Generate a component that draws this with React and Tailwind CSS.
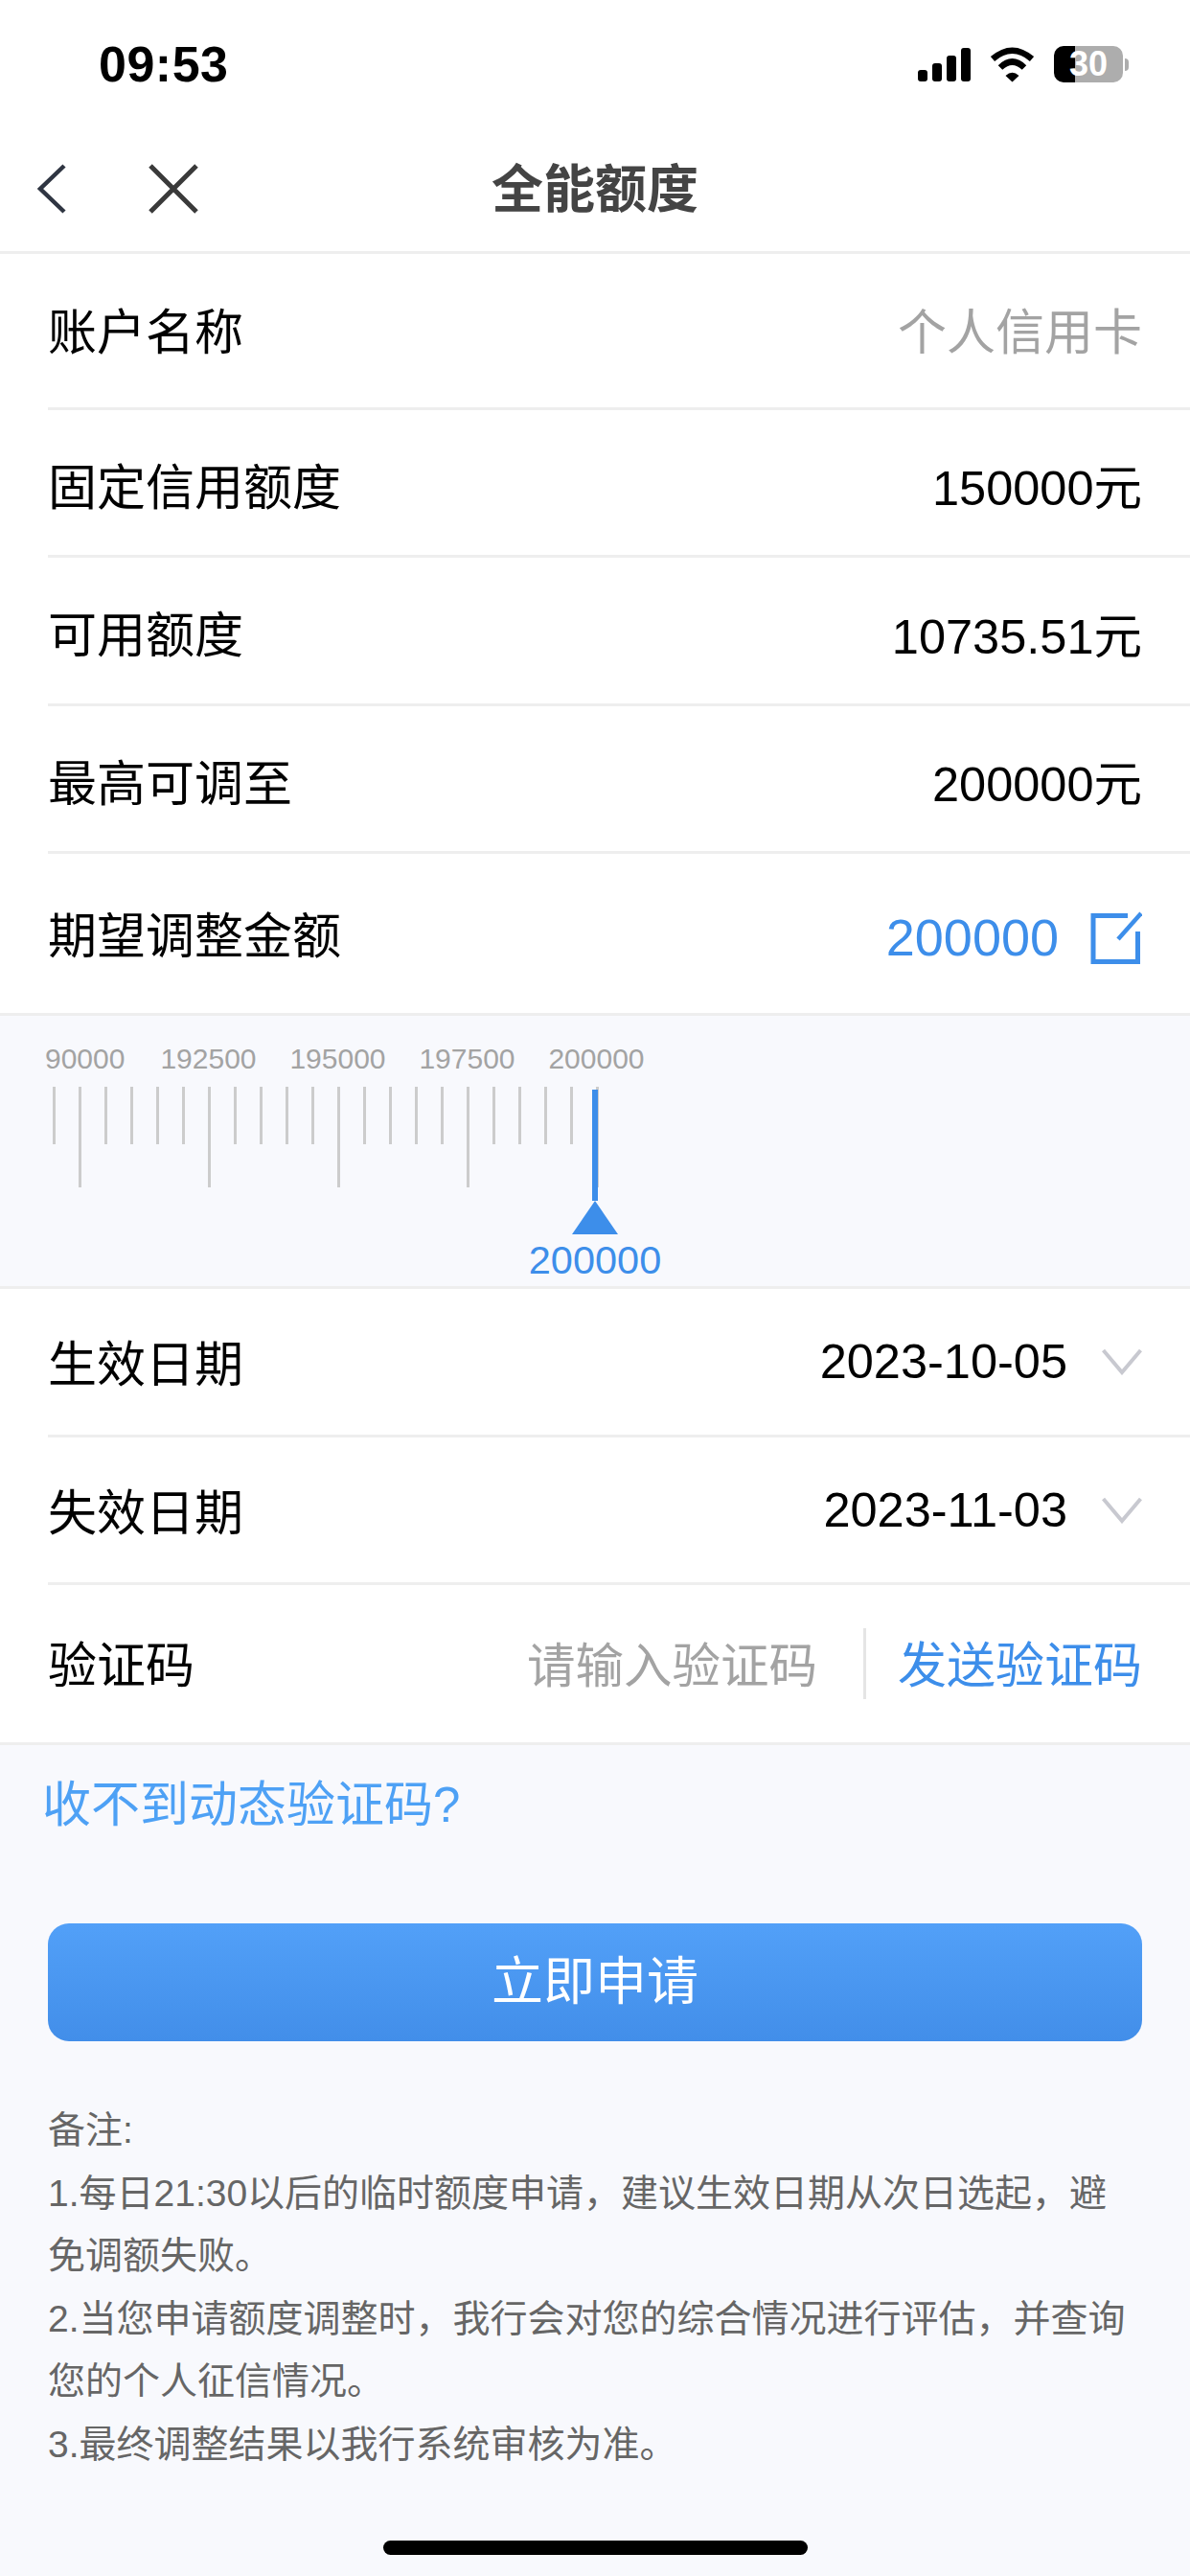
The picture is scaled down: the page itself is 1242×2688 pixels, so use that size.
import React from 'react';

const ticks = Array.from({ length: 22 }, (_, i) => i);

function SignalBars() {
    return (
        <div className="flex items-end gap-[5px] h-[35px]">
            <div className="w-[10px] h-[12px] rounded-[3px] bg-black" />
            <div className="w-[10px] h-[19px] rounded-[3px] bg-black" />
            <div className="w-[10px] h-[27px] rounded-[3px] bg-black" />
            <div className="w-[10px] h-[35px] rounded-[3px] bg-black" />
        </div>
    );
}

function WifiIcon() {
    return (
        <svg width="47" height="37" viewBox="0 0 47 37" fill="none">
            <path d="M3 12.5Q23.5 -5 44 12.5" stroke="#000" strokeWidth="6.5" />
            <path d="M11 21.5Q23.5 9.5 36 21.5" stroke="#000" strokeWidth="6.5" />
            <path d="M16.5 30Q23.5 23.5 30.5 30L23.5 36.5Z" fill="#000" />
        </svg>
    );
}

function Battery() {
    return (
        <div className="flex items-center">
            <div className="relative flex w-[72px] h-[38px]">
                <div className="w-[22px] h-full rounded-l-[10px] bg-black" />
                <div className="flex-1 h-full rounded-r-[10px] bg-[#adadad]" />
                <span className="absolute inset-0 flex items-center justify-center text-[36px] font-bold text-white leading-none">30</span>
            </div>
            <div className="w-[4px] h-[13px] ml-[2px] rounded-r-[4px] bg-[#adadad]" />
        </div>
    );
}

function Chevron() {
    return (
        <svg width="42" height="28" viewBox="0 0 42 28" fill="none">
            <path d="M1.500 2L21 25L40.500 2" stroke="#c8c9d0" strokeWidth="4" />
        </svg>
    );
}

function EditIcon() {
    return (
        <svg width="56" height="56" viewBox="0 0 56 56" fill="none">
            <path d="M41 4.500H5V52.500H51.500V21" stroke="#3d8eea" strokeWidth="5" />
            <path d="M31 29L55 2" stroke="#3d8eea" strokeWidth="4.500" />
        </svg>
    );
}

function Row({ label, height, labelClass = '', children }) {
    return (
        <div className={`ml-[50px] pr-[50px] flex items-center justify-between border-b-[3px] border-[#eeeeee] ${height}`}>
            <span className={`text-[51px] text-black ${labelClass}`}>{label}</span>
            {children}
        </div>
    );
}

function Ruler() {
    return (
        <div className="relative h-[285px] border-b-[3px] border-[#eeeeee] bg-[#f8f9fd] overflow-hidden">
            <div className="flex pt-[27px] pl-[47px] text-[30px] leading-[36px] text-[#a3a3a3]">
                <div className="w-[103px] pr-[20px] text-right">90000</div>
                <div className="w-[135px] text-center">192500</div>
                <div className="w-[135px] text-center">195000</div>
                <div className="w-[135px] text-center">197500</div>
                <div className="w-[135px] text-center">200000</div>
            </div>
            <div className="flex mt-[11px] pl-[55px]">
                {ticks.map((i) => (
                    <div key={i} className="w-[27px]">
                        <div className={`w-[3px] bg-[#cccccc] ${i % 5 === 1 ? 'h-[105px]' : 'h-[60px]'}`} />
                    </div>
                ))}
            </div>
            {/* указатель поверх шкалы */}
            <div className="absolute left-[521px] top-[77px] w-[200px] flex flex-col items-center">
                <div className="w-[6px] h-[116px] bg-[#3d8eea]" />
                <div className="w-0 h-0 border-x-[24px] border-x-transparent border-b-[35px] border-b-[#3d8eea]" />
                <div className="mt-[3px] text-[41.500px] leading-[48px] text-[#3d8eea]">200000</div>
            </div>
        </div>
    );
}

export default function App() {
    return (
        <div className="w-[1242px] h-[2688px] overflow-hidden bg-[#f8f9fd] font-['Liberation_Sans','Noto_Sans_CJK_SC',sans-serif]">
            <div className="bg-white">
                {/* статус-бар */}
                <div className="h-[120px] pt-[38px] pl-[103px] pr-[64px] flex items-start justify-between">
                    <span className="text-[52px] leading-[58px] font-bold text-black tracking-[0.5px]">09:53</span>
                    <div className="flex items-center gap-[20px] pt-[10px]">
                        <SignalBars />
                        <WifiIcon />
                        <Battery />
                    </div>
                </div>

                {/* навигация */}
                <div className="relative h-[145px] pt-[14px] border-b-[3px] border-[#eeeeee] flex items-center justify-center">
                    <div className="absolute left-[38px] top-[51px] flex items-center gap-[84px]">
                        <svg width="32" height="52" viewBox="0 0 32 52" fill="none">
                            <path d="M29 2L4 26L29 50" stroke="#2f3542" strokeWidth="4.500" />
                        </svg>
                        <svg width="54" height="52" viewBox="0 0 54 52" fill="none">
                            <path d="M3 2L51 50M51 2L3 50" stroke="#3a3a3a" strokeWidth="5" />
                        </svg>
                    </div>
                    <span className="text-[54px] font-bold text-[#444444]">全能额度</span>
                </div>

                <Row label="账户名称" height="h-[163px] pt-[6px]">
                    <span className="text-[51px] text-[#a3a3a3]">个人信用卡</span>
                </Row>
                <Row label="固定信用额度" height="h-[154px] pt-[13px]">
                    <span className="text-[50.500px] text-black">150000元</span>
                </Row>
                <Row label="可用额度" height="h-[155px] pt-[13px]">
                    <span className="text-[50.500px] text-black">10735.51元</span>
                </Row>
                <Row label="最高可调至" height="h-[154px] pt-[13px]">
                    <span className="text-[50.500px] text-black">200000元</span>
                </Row>
                <div className="pl-[50px] pr-[50px] h-[169px] pt-[9px] flex items-center justify-between border-b-[3px] border-[#eeeeee]">
                    <span className="text-[51px] text-black">期望调整金额</span>
                    <div className="flex items-center gap-[31px]">
                        <span className="text-[54px] text-[#3d8eea]">200000</span>
                        <EditIcon />
                    </div>
                </div>

                <Ruler />

                <Row label="生效日期" height="h-[155px]" labelClass="pt-[9px]">
                    <div className="flex items-center gap-[36px]">
                        <span className="text-[50.500px] text-black">2023-10-05</span>
                        <Chevron />
                    </div>
                </Row>
                <Row label="失效日期" height="h-[154px]" labelClass="pt-[9px]">
                    <div className="flex items-center gap-[36px]">
                        <span className="text-[50.500px] text-black">2023-11-03</span>
                        <Chevron />
                    </div>
                </Row>
                <div className="pl-[50px] pr-[50px] h-[167px] flex items-center justify-between border-b-[3px] border-[#eeeeee]">
                    <span className="text-[51px] text-black pt-[6px]">验证码</span>
                    <div className="flex items-center">
                        <span className="text-[50.500px] text-[#a3a3a3] pt-[6px]">请输入验证码</span>
                        <div className="w-[3px] h-[74px] ml-[48px] mr-[33px] bg-[#e5e5e5]" />
                        <span className="text-[51px] text-[#3d8eea] pt-[6px]">发送验证码</span>
                    </div>
                </div>
            </div>

            <div className="pl-[44px] pt-[33px] text-[51px] leading-[60px] text-[#4ea1f5]">收不到动态验证码?</div>

            <div className="mx-[50px] mt-[93px] h-[123px] rounded-[22px] flex items-center justify-center bg-gradient-to-b from-[#52a0f8] to-[#428ee9] text-[54px] text-white">
                立即申请
            </div>

            <div className="mt-[60px] px-[50px] text-[39px] leading-[65.6px] text-[#666666] whitespace-nowrap">
                <div>备注:</div>
                <div>{'1.每日21:30以后的临时额度申请\uFF0C建议生效日期从次日选起\uFF0C避'}</div>
                <div>免调额失败。</div>
                <div>{'2.当您申请额度调整时\uFF0C我行会对您的综合情况进行评估\uFF0C并查询'}</div>
                <div>您的个人征信情况。</div>
                <div>3.最终调整结果以我行系统审核为准。</div>
            </div>

            <div className="mt-[67px] mx-auto w-[443px] h-[15px] rounded-full bg-black" />
        </div>
    );
}
